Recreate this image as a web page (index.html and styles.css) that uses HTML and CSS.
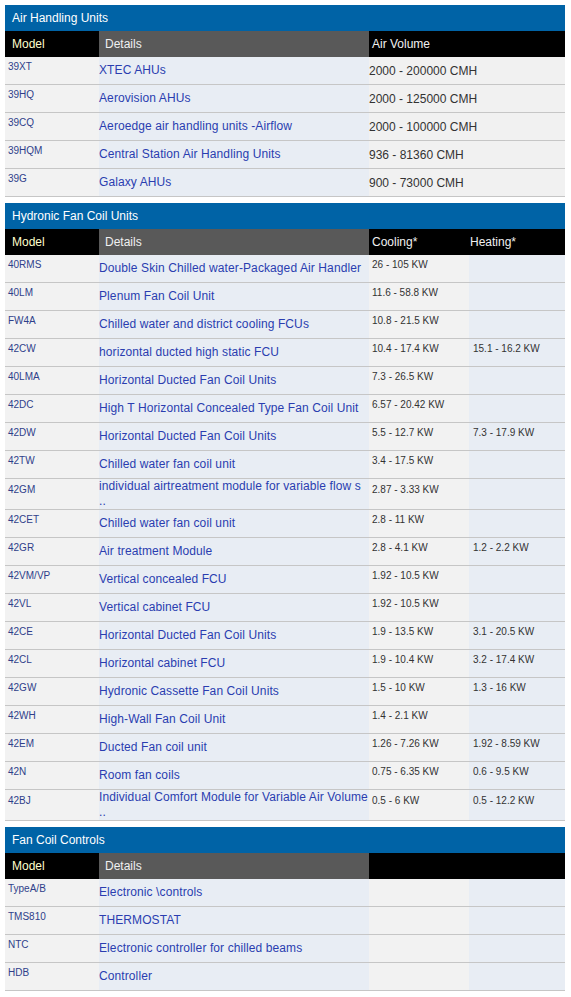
FILE: index.html
```html
<!DOCTYPE html>
<html>
<head>
<meta charset="utf-8">
<link rel="stylesheet" href="styles.css">
</head>
<body>
<div class="page">
  <section class="block">
    <div class="title">Air Handling Units</div>
    <table class="grid">
      <colgroup><col class="c-model"><col class="c-details"><col class="c-wide"></colgroup>
      <thead><tr><th class="h-model">Model</th><th class="h-details">Details</th><th class="h-val">Air Volume</th></tr></thead>
      <tbody>
        <tr><td class="model">39XT</td><td class="details">XTEC AHUs</td><td class="vol">2000 - 200000 CMH</td></tr>
        <tr><td class="model">39HQ</td><td class="details">Aerovision AHUs</td><td class="vol">2000 - 125000 CMH</td></tr>
        <tr><td class="model">39CQ</td><td class="details">Aeroedge air handling units -Airflow</td><td class="vol">2000 - 100000 CMH</td></tr>
        <tr><td class="model">39HQM</td><td class="details">Central Station Air Handling Units</td><td class="vol">936 - 81360 CMH</td></tr>
        <tr><td class="model">39G</td><td class="details">Galaxy AHUs</td><td class="vol">900 - 73000 CMH</td></tr>
      </tbody>
    </table>
  </section>

  <section class="block">
    <div class="title">Hydronic Fan Coil Units</div>
    <table class="grid">
      <colgroup><col class="c-model"><col class="c-details"><col class="c-cool"><col class="c-heat"></colgroup>
      <thead><tr><th class="h-model">Model</th><th class="h-details">Details</th><th class="h-val">Cooling*</th><th class="h-val h-heat">Heating*</th></tr></thead>
      <tbody>
        <tr><td class="model">40RMS</td><td class="details">Double Skin Chilled water-Packaged Air Handler</td><td class="cool">26 - 105 KW</td><td class="heat"></td></tr>
        <tr><td class="model">40LM</td><td class="details">Plenum Fan Coil Unit</td><td class="cool">11.6 - 58.8 KW</td><td class="heat"></td></tr>
        <tr><td class="model">FW4A</td><td class="details">Chilled water and district cooling FCUs</td><td class="cool">10.8 - 21.5 KW</td><td class="heat"></td></tr>
        <tr><td class="model">42CW</td><td class="details">horizontal ducted high static FCU</td><td class="cool">10.4 - 17.4 KW</td><td class="heat">15.1 - 16.2 KW</td></tr>
        <tr><td class="model">40LMA</td><td class="details">Horizontal Ducted Fan Coil Units</td><td class="cool">7.3 - 26.5 KW</td><td class="heat"></td></tr>
        <tr><td class="model">42DC</td><td class="details">High T Horizontal Concealed Type Fan Coil Unit</td><td class="cool">6.57 - 20.42 KW</td><td class="heat"></td></tr>
        <tr><td class="model">42DW</td><td class="details">Horizontal Ducted Fan Coil Units</td><td class="cool">5.5 - 12.7 KW</td><td class="heat">7.3 - 17.9 KW</td></tr>
        <tr><td class="model">42TW</td><td class="details">Chilled water fan coil unit</td><td class="cool">3.4 - 17.5 KW</td><td class="heat"></td></tr>
        <tr><td class="model">42GM</td><td class="details">individual airtreatment module for variable flow s ..</td><td class="cool">2.87 - 3.33 KW</td><td class="heat"></td></tr>
        <tr><td class="model">42CET</td><td class="details">Chilled water fan coil unit</td><td class="cool">2.8 - 11 KW</td><td class="heat"></td></tr>
        <tr><td class="model">42GR</td><td class="details">Air treatment Module</td><td class="cool">2.8 - 4.1 KW</td><td class="heat">1.2 - 2.2 KW</td></tr>
        <tr><td class="model">42VM/VP</td><td class="details">Vertical concealed FCU</td><td class="cool">1.92 - 10.5 KW</td><td class="heat"></td></tr>
        <tr><td class="model">42VL</td><td class="details">Vertical cabinet FCU</td><td class="cool">1.92 - 10.5 KW</td><td class="heat"></td></tr>
        <tr><td class="model">42CE</td><td class="details">Horizontal Ducted Fan Coil Units</td><td class="cool">1.9 - 13.5 KW</td><td class="heat">3.1 - 20.5 KW</td></tr>
        <tr><td class="model">42CL</td><td class="details">Horizontal cabinet FCU</td><td class="cool">1.9 - 10.4 KW</td><td class="heat">3.2 - 17.4 KW</td></tr>
        <tr><td class="model">42GW</td><td class="details">Hydronic Cassette Fan Coil Units</td><td class="cool">1.5 - 10 KW</td><td class="heat">1.3 - 16 KW</td></tr>
        <tr><td class="model">42WH</td><td class="details">High-Wall Fan Coil Unit</td><td class="cool">1.4 - 2.1 KW</td><td class="heat"></td></tr>
        <tr><td class="model">42EM</td><td class="details">Ducted Fan coil unit</td><td class="cool">1.26 - 7.26 KW</td><td class="heat">1.92 - 8.59 KW</td></tr>
        <tr><td class="model">42N</td><td class="details">Room fan coils</td><td class="cool">0.75 - 6.35 KW</td><td class="heat">0.6 - 9.5 KW</td></tr>
        <tr><td class="model">42BJ</td><td class="details">Individual Comfort Module for Variable Air Volume ..</td><td class="cool">0.5 - 6 KW</td><td class="heat">0.5 - 12.2 KW</td></tr>
      </tbody>
    </table>
  </section>

  <section class="block">
    <div class="title">Fan Coil Controls</div>
    <table class="grid">
      <colgroup><col class="c-model"><col class="c-details"><col class="c-cool"><col class="c-heat"></colgroup>
      <thead><tr><th class="h-model">Model</th><th class="h-details">Details</th><th class="h-val"></th><th class="h-val h-heat"></th></tr></thead>
      <tbody>
        <tr><td class="model">TypeA/B</td><td class="details">Electronic \controls</td><td class="cool"></td><td class="heat"></td></tr>
        <tr><td class="model">TMS810</td><td class="details">THERMOSTAT</td><td class="cool"></td><td class="heat"></td></tr>
        <tr><td class="model">NTC</td><td class="details">Electronic controller for chilled beams</td><td class="cool"></td><td class="heat"></td></tr>
        <tr><td class="model">HDB</td><td class="details">Controller</td><td class="cool"></td><td class="heat"></td></tr>
      </tbody>
    </table>
  </section>
</div>
</body>
</html>
```

FILE: styles.css
```css
html, body {
  margin: 0;
  padding: 0;
  background: #ffffff;
}

body {
  font-family: "Liberation Sans", Arial, sans-serif;
}

.page {
  padding: 5px 6px 0 5px;
  display: flex;
  flex-direction: column;
  gap: 6px;
  width: 560px;
}

.block {
  display: flex;
  flex-direction: column;
}

.title {
  height: 26px;
  background: #0063a6;
  color: #ffffff;
  font-size: 12px;
  line-height: 26px;
  padding-left: 7px;
}

.grid {
  width: 560px;
  table-layout: fixed;
  border-collapse: separate;
  border-spacing: 0;
}

.c-model { width: 94px; }
.c-details { width: 270px; }
.c-wide { width: 196px; }
.c-cool { width: 100px; }
.c-heat { width: 96px; }

.grid th {
  height: 26px;
  padding: 0 0 0 3px;
  font-size: 12px;
  font-weight: normal;
  text-align: left;
  vertical-align: middle;
  color: #f0f0f0;
  background: #000000;
  box-sizing: border-box;
}

.grid th.h-model {
  padding-left: 7px;
  color: #ffffcc;
}

.grid th.h-details {
  padding-left: 6px;
  background: #595959;
}

.grid th.h-heat {
  padding-left: 1px;
}

.grid td {
  height: 28px;
  box-sizing: border-box;
  padding: 0;
  border-bottom: 1px solid #c6c6c6;
  vertical-align: middle;
}

.grid td.model {
  background: #f2f2f2;
  color: #2f3f8a;
  font-size: 10px;
  padding: 0 0 8px 3px;
  line-height: 12px;
}

.grid td.details {
  background: #e8edf4;
  color: #2a3db0;
  font-size: 12px;
  line-height: 15px;
  letter-spacing: 0.1px;
}

.grid td.vol {
  background: #f1f1f1;
  color: #333333;
  font-size: 12px;
}

.grid td.cool,
.grid td.heat {
  color: #333333;
  font-size: 10px;
  line-height: 12px;
  padding: 0 0 8px 3px;
}

.grid td.cool {
  background: #f2f2f2;
}

.grid td.heat {
  background: #e8edf4;
  padding-left: 4px;
}
```
